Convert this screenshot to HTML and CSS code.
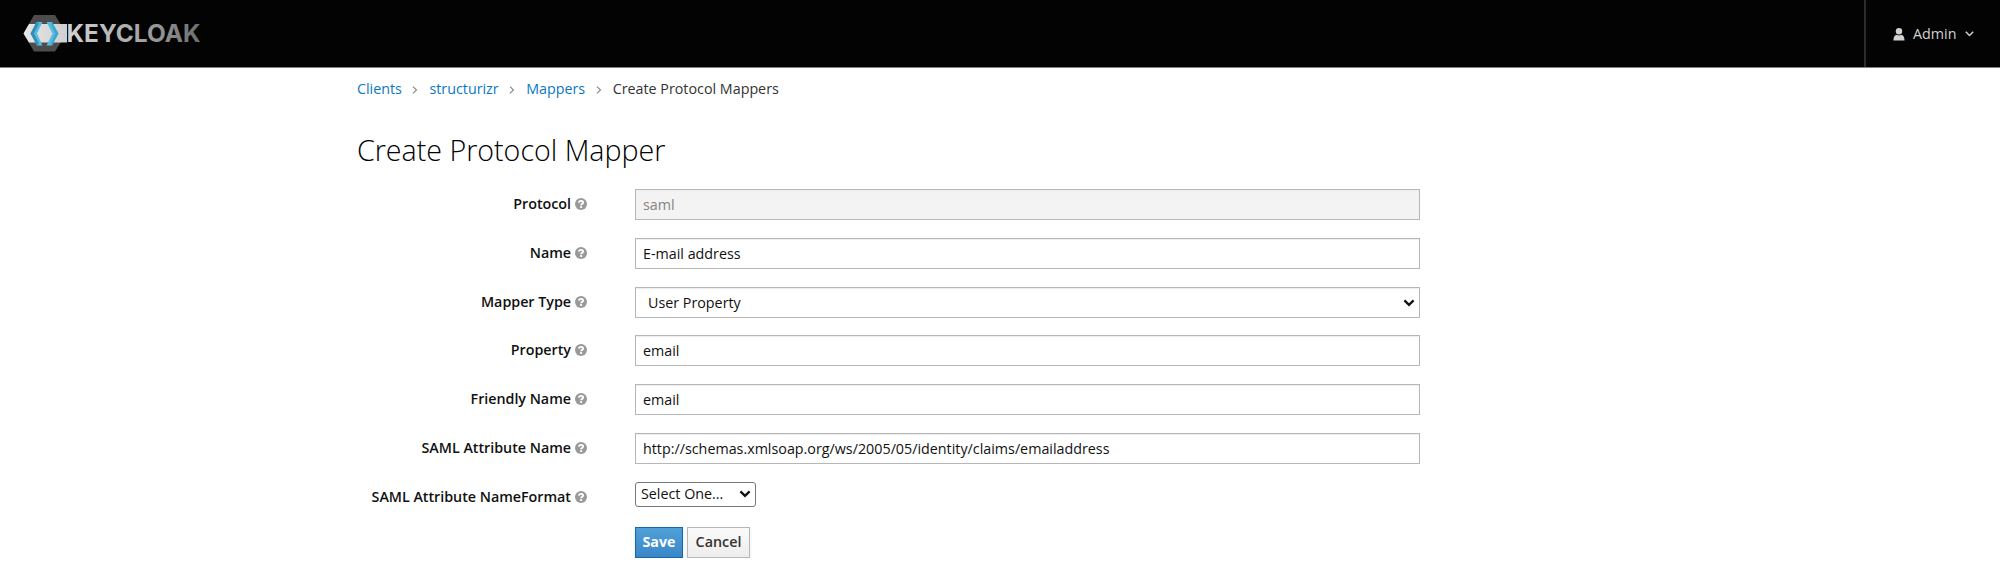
FILE: index.html
```
<!DOCTYPE html>
<html lang="en">
<head>
<meta charset="utf-8">
<title>Create Protocol Mapper</title>
<link rel="stylesheet" href="styles.css">
</head>
<body>
<svg class="defs" aria-hidden="true">
  <symbol id="help" viewBox="0 0 12 12"><circle cx="6" cy="6" r="6" fill="#999"/><path d="M3.900 4.700C4.100 2.300 8.100 2.300 8.100 4.500C8.100 5.900 6.100 5.800 6.100 7.300" fill="none" stroke="#fff" stroke-width="1.900"/><rect x="5.100" y="8.100" width="2" height="1.800" fill="#fff"/></symbol>
  <symbol id="caret" viewBox="0 0 12 8"><path d="M1.400 1.400L6 5.800L10.600 1.400" fill="none" stroke="#111" stroke-width="2.300"/></symbol>
  <symbol id="angle" viewBox="0 0 6 8"><path d="M1 .7L4.500 4L1 7.300" fill="none" stroke="#888" stroke-width="1.100"/></symbol>
</svg>
<header class="navbar">
  <svg class="logo" width="190" height="38" viewBox="0 0 190 38">
    <defs>
      <linearGradient id="word" gradientUnits="userSpaceOnUse" x1="45" y1="0" x2="177" y2="0"><stop offset="0" stop-color="#d2d2d2"/><stop offset=".5" stop-color="#aaa"/><stop offset="1" stop-color="#6e6e6e"/></linearGradient>
      <linearGradient id="band" x1="0" y1="0" x2="1" y2="0"><stop offset="0" stop-color="#e8e8e8"/><stop offset="1" stop-color="#cfcfcf"/></linearGradient>
    </defs>
    <path d="M11 0H32L38 10V27L32 36.500H11L0.500 18.500Z" fill="#4c4c4c"/>
    <path d="M6 9H44V27.500H6L0.500 18.500Z" fill="url(#band)"/>
    <path d="M13.500 7H19.500L14 18.500L19.500 30.500H14L7.500 18.500Z" fill="#55bce2"/>
    <path d="M13.500 7L7.500 18.500L14 30.500L16 28.500L11 18.500L16 8.500Z" fill="#3290b8"/>
    <path d="M23.500 7H29L35.500 18.500L29 30.500H23.500L29.500 18.500Z" fill="#55bce2"/>
    <path d="M29 7L35.500 18.500L29 30.500L27.500 29L32.500 18.500L27.500 9Z" fill="#3fa5cf"/>
    <text class="word" x="43.500" y="27.300" textLength="134" lengthAdjust="spacingAndGlyphs">KEYCLOAK</text>
  </svg>
  <div class="user">
    <svg width="12" height="13" viewBox="0 0 12 13"><circle cx="6" cy="3.300" r="3.200" fill="#d1d1d1"/><path d="M.5 12.500C.5 8.500 2 7 4 6.800Q6 8 8 6.800C10 7 11.500 8.500 11.500 12.500Z" fill="#d1d1d1"/></svg>
    <span class="user-name">Admin</span>
    <svg width="9" height="6" viewBox="0 0 9 6"><path d="M.8 .8L4.500 4.500L8.200 .8" fill="none" stroke="#d1d1d1" stroke-width="1.500"/></svg>
  </div>
</header>
<main class="content">
  <nav class="crumbs">
    <a>Clients</a><svg class="sep"><use href="#angle"/></svg><a>structurizr</a><svg class="sep"><use href="#angle"/></svg><a>Mappers</a><svg class="sep"><use href="#angle"/></svg><span>Create Protocol Mappers</span>
  </nav>
  <h1 class="title"><span>Create Protocol Mapper</span></h1>
  <form class="form">
    <div class="row"><label class="label"><span>Protocol</span><svg class="help"><use href="#help"/></svg></label><div class="field disabled">saml</div></div>
    <div class="row"><label class="label"><span>Name</span><svg class="help"><use href="#help"/></svg></label><div class="field">E-mail address</div></div>
    <div class="row"><label class="label"><span>Mapper Type</span><svg class="help"><use href="#help"/></svg></label><div class="field select"><span>User Property</span><svg class="caret"><use href="#caret"/></svg></div></div>
    <div class="row"><label class="label"><span>Property</span><svg class="help"><use href="#help"/></svg></label><div class="field">email</div></div>
    <div class="row"><label class="label"><span>Friendly Name</span><svg class="help"><use href="#help"/></svg></label><div class="field">email</div></div>
    <div class="row"><label class="label"><span>SAML Attribute Name</span><svg class="help"><use href="#help"/></svg></label><div class="field"><span>http://schemas.xmlsoap.org/ws/2005/05/identity/claims/emailaddress</span></div></div>
    <div class="row"><label class="label"><span>SAML Attribute NameFormat</span><svg class="help"><use href="#help"/></svg></label><div class="native"><span>Select One...</span><svg class="caret"><use href="#caret"/></svg></div></div>
  </form>
  <div class="actions"><button class="btn primary">Save</button><button class="btn">Cancel</button></div>
</main>
</body>
</html>
```
FILE: styles.css
```
* { box-sizing: border-box; }
body { margin: 0; background: #fff; color: #111; font: 14.300px/20px "Open Sans", sans-serif; }
.defs { position: absolute; width: 0; height: 0; }
.navbar { height: 68px; background: #030303; border-bottom: 1px solid #808080; display: flex; justify-content: space-between; }
.logo { margin: 15px 0 0 23px; }
.word { font: 700 24.700px/30px Inter, sans-serif; fill: url(#word); }
.user { width: 136px; border-left: 2px solid #2b2b2b; padding: 1px 0 0 27px; display: flex; align-items: center; color: #d1d1d1; }
.user-name { margin: 0 9px 0 8px; font-weight: 500; }
.content { padding: 0 580px 0 357px; }
.crumbs { display: flex; align-items: center; padding-top: 11px; height: 31px; color: #333; }
.crumbs a { color: #0b78c4; }
.sep { width: 6px; height: 8px; margin: 2px 11px 0 10.500px; }
.title { margin: 0; height: 90px; padding-top: 31px; font-size: 28.600px; line-height: 40px; font-weight: 300; color: #000; }
.form { display: grid; grid-auto-rows: 31px; row-gap: 17.800px; }
.row { display: grid; grid-template-columns: 230px 1fr; column-gap: 48px; align-items: start; }
.label { display: flex; justify-content: flex-end; align-items: center; gap: 4px; height: 30px; font-weight: 600; letter-spacing: -.02px; }
.help { width: 12px; height: 12px; }
.field { height: 31px; border: 1px solid #b7b7b7; box-shadow: inset 0 1px 1px #eee; padding: 1px 4px 0 7px; display: flex; align-items: center; }
.disabled { background: #f3f3f3; color: #858585; }
.select { justify-content: space-between; padding-left: 12px; }
.caret { width: 12px; height: 8px; }
.native { width: 121px; height: 25px; border: 1px solid #777; border-radius: 3px; padding: 0 4px 0 5px; display: flex; align-items: center; justify-content: space-between; }
.actions { display: flex; gap: 4px; padding: 14px 0 0 278px; }
.btn { height: 31px; width: 63px; padding: 0; border: 1px solid #b7b7b7; background: linear-gradient(#fafafa, #ededed); box-shadow: 0 2px 3px rgba(0,0,0,.1); color: #333; font: 600 14.300px/28px "Open Sans", sans-serif; }
.primary { width: 48px; border-color: #1767a7; background: linear-gradient(#4fa0d8, #3a87c8); color: #fff; font-weight: 700; }
```
